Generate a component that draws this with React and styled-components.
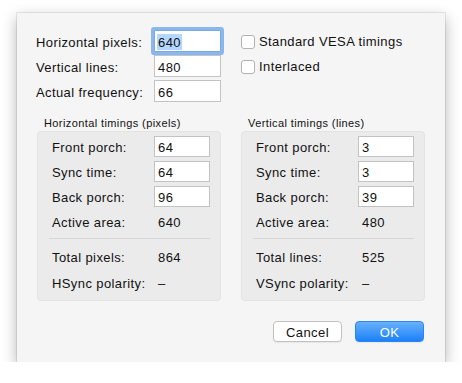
import React from 'react';
import styled, { createGlobalStyle } from 'styled-components';

const Global = createGlobalStyle`
  body {
    margin: 0;
    background: #ffffff;
    font-family: "Liberation Sans", Arial, sans-serif;
    color: #111111;
    letter-spacing: 0.4px;
  }
`;

const Page = styled.div`
  padding: 13px 0 0 17px;
`;

const Dialog = styled.div`
  width: 428px;
  height: 349px;
  box-sizing: border-box;
  padding: 17px 20px 20px 20px;
  background: #f5f5f5;
  box-shadow: 0 0 0 1px rgba(0, 0, 0, 0.08), 0 5px 14px rgba(0, 0, 0, 0.3);
  display: flex;
  flex-direction: column;
`;

const Top = styled.div`
  display: flex;
  gap: 20px;
`;

const Form = styled.div`
  display: grid;
  grid-template-columns: 117px 67px;
  grid-auto-rows: 22px;
  row-gap: 3px;
  align-items: center;
  font-size: 13px;
`;

const Label = styled.span`
  margin-left: -1px;
  padding-top: 2px;
`;

const Input = styled.div`
  box-sizing: border-box;
  height: ${(p) => (p.small ? '21px' : '22px')};
  width: ${(p) => (p.small ? '56px' : '67px')};
  background: #fff;
  border: 1px solid #c3c3c3;
  padding: 0 3px;
  display: flex;
  align-items: center;
  font-size: 13px;
  padding-top: 2px;
  box-shadow: ${(p) => (p.focused ? '0 0 0 3px #8ab7f0' : 'none')};
  border-color: ${(p) => (p.focused ? '#7aa9e8' : '#c3c3c3')};
  border-radius: ${(p) => (p.focused ? '1px' : '0')};
`;

const Selected = styled.span`
  background: #b3d7ff;
  padding: 1px 1px 0 1px;
  margin-left: -1px;
`;

const Checks = styled.div`
  display: grid;
  grid-auto-rows: 22px;
  row-gap: 3px;
  align-items: center;
  font-size: 13px;
`;

const Check = styled.label`
  display: flex;
  align-items: center;
  gap: 4px;
  padding-top: 1px;
`;

const Box = styled.span`
  width: 14px;
  height: 14px;
  box-sizing: border-box;
  background: #fff;
  border: 1px solid #b2b2b2;
  border-radius: 3px;
`;

const Groups = styled.div`
  display: grid;
  grid-template-columns: 184px 184px;
  column-gap: 20px;
  margin-top: 14px;
`;

const Group = styled.div`
  display: flex;
  flex-direction: column;
`;

const GroupTitle = styled.div`
  font-size: 11px;
  line-height: 14px;
  padding-left: 7px;
  margin-bottom: 1px;
`;

const Panel = styled.div`
  height: 170px;
  box-sizing: border-box;
  background: #ebebeb;
  border: 1px solid #e3e3e3;
  border-radius: 4px;
  padding: 4px 10px 0 14px;
  display: flex;
  flex-direction: column;
`;

const Row = styled.div`
  display: grid;
  grid-template-columns: 102px 56px;
  height: 21px;
  align-items: center;
  font-size: 13px;
  margin-top: ${(p) => p.gap || 4}px;
  &:first-child {
    margin-top: 0;
  }
`;

const RowLabel = styled.span`
  padding-top: 2px;
`;

const Value = styled.span`
  padding: 2px 0 0 4px;
`;

const Separator = styled.div`
  height: 1px;
  background: #d6d6d6;
  margin: 6px 0 0 -3px;
`;

const Buttons = styled.div`
  display: flex;
  justify-content: flex-end;
  gap: 13px;
  margin-top: auto;
  padding-right: 1px;
`;

const Button = styled.button`
  width: 69px;
  height: 21px;
  box-sizing: border-box;
  font-family: "Liberation Sans", Arial, sans-serif;
  font-size: 13px;
  letter-spacing: 0.4px;
  padding: 1px 0 0;
  border-radius: 4px;
  border: 1px solid ${(p) => (p.primary ? '#2b86f4' : '#c2c2c2')};
  background: ${(p) =>
    p.primary ? 'linear-gradient(#69b1fb, #1b81fa)' : '#ffffff'};
  color: ${(p) => (p.primary ? '#ffffff' : '#111111')};
  box-shadow: 0 1px 1px rgba(0, 0, 0, 0.06);
`;

const horizontal = {
  title: 'Horizontal timings (pixels)',
  active: 640,
  total: ['Total pixels:', 864],
  polarity: 'HSync polarity:',
  inputs: [64, 64, 96],
};

const vertical = {
  title: 'Vertical timings (lines)',
  active: 480,
  total: ['Total lines:', 525],
  polarity: 'VSync polarity:',
  inputs: [3, 3, 39],
};

const fields = ['Front porch:', 'Sync time:', 'Back porch:'];

function Timings({ data }) {
  return (
    <Group>
      <GroupTitle>{data.title}</GroupTitle>
      <Panel>
        {fields.map((f, i) => (
          <Row key={f}>
            <RowLabel>{f}</RowLabel>
            <Input small>{data.inputs[i]}</Input>
          </Row>
        ))}
        <Row>
          <RowLabel>Active area:</RowLabel>
          <Value>{data.active}</Value>
        </Row>
        <Separator />
        <Row gap={7}>
          <RowLabel>{data.total[0]}</RowLabel>
          <Value>{data.total[1]}</Value>
        </Row>
        <Row gap={5}>
          <RowLabel>{data.polarity}</RowLabel>
          <Value>–</Value>
        </Row>
      </Panel>
    </Group>
  );
}

export default function App() {
  return (
    <Page>
      <Global />
      <Dialog>
        <Top>
          <Form>
            <Label>Horizontal pixels:</Label>
            <Input focused>
              <Selected>640</Selected>
            </Input>
            <Label>Vertical lines:</Label>
            <Input>480</Input>
            <Label>Actual frequency:</Label>
            <Input>66</Input>
          </Form>
          <Checks>
            <Check>
              <Box />
              Standard VESA timings
            </Check>
            <Check>
              <Box />
              Interlaced
            </Check>
          </Checks>
        </Top>
        <Groups>
          <Timings data={horizontal} />
          <Timings data={vertical} />
        </Groups>
        <Buttons>
          <Button>Cancel</Button>
          <Button primary>OK</Button>
        </Buttons>
      </Dialog>
    </Page>
  );
}
